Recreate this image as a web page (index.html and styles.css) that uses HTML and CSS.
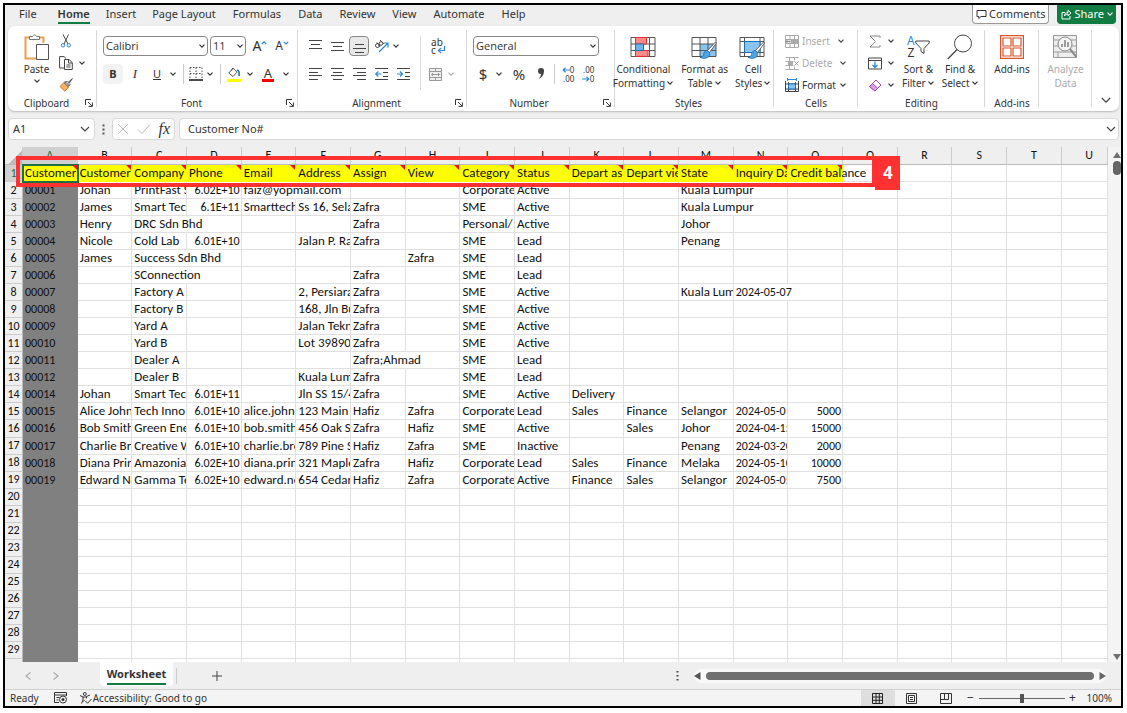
FILE: index.html
```html
<!DOCTYPE html>
<html lang="en">
<head>
<meta charset="utf-8">
<title>Worksheet</title>
<link rel="stylesheet" href="styles.css">
</head>
<body>
<svg class="defs" aria-hidden="true">
  <symbol id="chev" viewBox="0 0 8 8"><path d="M1.5 2.7 4 5.2 6.5 2.7" fill="none" stroke="currentColor" stroke-width="1.2"/></symbol>
  <symbol id="launch" viewBox="0 0 8 8"><path d="M.5 6V.5H6M3 3l4 4M7.400 3.500V7.400H3.500" fill="none" stroke="currentColor"/></symbol>
  <symbol id="brush" viewBox="0 0 18 18"><path d="M16.500 1 8.500 9.500l2 2L17.500 2Z" fill="#fff" stroke="#555" stroke-width=".9"/><path d="M8.500 9.500c-3 0-3.500 2-4 4-.4 1.500-1.500 2.500-3.500 2.700 2 1.500 6.500 1.500 8.300-.2 1.600-1.500 1.500-3 1.200-4.500Z" fill="#4ea3e0" stroke="#1a6fb5" stroke-width=".8"/></symbol>
</svg>
<div class="app">
  <header class="menu">
    <nav class="tabs">
      <button class="tab">File</button>
      <button class="tab active">Home</button>
      <button class="tab">Insert</button>
      <button class="tab">Page Layout</button>
      <button class="tab">Formulas</button>
      <button class="tab">Data</button>
      <button class="tab">Review</button>
      <button class="tab">View</button>
      <button class="tab">Automate</button>
      <button class="tab">Help</button>
    </nav>
    <button class="pill"><svg width="11" height="11" viewBox="0 0 11 11"><path d="M1 1.500h9v6H5L2.800 9.600V7.500H1Z" fill="none" stroke="#333"/></svg>Comments</button>
    <button class="pill share"><svg width="11" height="11" viewBox="0 0 11 11"><path d="M4 3.500H1v6.500h8V7M3.500 7C3.500 4.500 5 3.500 7 3.500V1.200L10 4 7 6.800V5C5.500 5 4.300 5.500 3.500 7Z" fill="none" stroke="#fff"/></svg>Share<svg class="chev"><use href="#chev"/></svg></button>
  </header>

  <main class="ribbon">
    <section class="group">
      <div class="body clip">
        <button class="big paste"><svg width="26" height="26" viewBox="0 0 26 26"><path d="M7 3.500H1.500v21H12M14 3.500h5.500V9" fill="none" stroke="#e8a04c" stroke-width="2"/><path d="M3 5h15v5h-6v13H3Z" fill="#fff"/><path d="M5.500 5.500V2.500h3C9 .5 12 .5 12.500 2.500h3v3Z" fill="#fff" stroke="#777"/><path d="M12.500 10.500h12v15h-12Z" fill="#fff" stroke="#555"/></svg>
          <span>Paste</span><svg class="chev"><use href="#chev"/></svg></button>
        <div class="stack">
          <button class="row" aria-label="Cut"><svg width="14" height="14" viewBox="0 0 14 14"><path d="M4 .5 9 10M9.500.5 5 10" fill="none" stroke="#444"/><circle cx="4" cy="11.300" r="1.700" fill="none" stroke="#2b88d8"/><circle cx="9.800" cy="11.300" r="1.700" fill="none" stroke="#2b88d8"/></svg></button>
          <button class="row" aria-label="Copy"><svg width="14" height="14" viewBox="0 0 14 14"><path d="M5 12H.6V.6H5L7 2.500M5.500 3.500H10L13.300 6.500V13.500H5.500ZM9.500 3.500V7H13M7.500 9h4M7.500 11h4" fill="none" stroke="#444"/></svg><svg class="chev"><use href="#chev"/></svg></button>
          <button class="row" aria-label="Format painter"><svg width="14" height="14" viewBox="0 0 14 14"><path d="M5 4.500 1 8.500 6 13.200 9.500 9Z" fill="#f8b26a" stroke="#d9771b"/><path d="M6 3.500 10.500 8M13.300.7 9 4.500 7.500 3 5.500 5 9 8.500 11 6.500 10 5.500Z" fill="#fff" stroke="#444"/></svg></button>
        </div>
      </div>
      <footer>Clipboard<button class="launch" aria-label="Clipboard settings"><svg width="8" height="8"><use href="#launch"/></svg></button></footer>
    </section>

    <section class="group">
      <div class="body lines">
        <div class="line">
          <label class="combo grow"><select aria-label="Font"><option>Calibri</option></select><svg class="chev"><use href="#chev"/></svg></label>
          <label class="combo size"><select aria-label="Font size"><option>11</option></select><svg class="chev"><use href="#chev"/></svg></label>
          <button class="ic w24 grower" aria-label="Grow font"><span class="bigA">A</span><svg width="6" height="12" viewBox="0 0 6 12"><path d="M.8 4 3 1.800 5.200 4" fill="none" stroke="#2b88d8" stroke-width="1.200"/></svg></button>
          <button class="ic w20" aria-label="Shrink font"><span class="smallA">A</span><svg width="6" height="12" viewBox="0 0 6 12"><path d="M.8 1.800 3 4 5.200 1.800" fill="none" stroke="#2b88d8" stroke-width="1.200"/></svg></button>
        </div>
        <div class="line">
          <button class="ic w20 soft"><b>B</b></button>
          <button class="ic w24"><i>I</i></button>
          <button class="ic w20"><u>U</u></button>
          <button class="ic w12" aria-label="Underline options"><svg class="chev"><use href="#chev"/></svg></button>
          <span class="sep"></span>
          <button class="ic w16" aria-label="Borders"><svg width="14" height="14" viewBox="0 0 14 14"><path d="M1 .5h12M1 6.500h12M1 .5V12M7 .5V12M13 .5V12" fill="none" stroke="#555" stroke-dasharray="1.500 1.500"/><path d="M0 13h14" stroke="#111" stroke-width="1.500"/></svg></button>
          <button class="ic w12" aria-label="Border options"><svg class="chev"><use href="#chev"/></svg></button>
          <span class="sep"></span>
          <button class="ic w20" aria-label="Fill colour"><svg width="14" height="15" viewBox="0 0 14 15"><path d="M6 1 1.800 6 6 9.500 10 5.200ZM6 1 4.500 3.500" fill="#fff" stroke="#555"/><path d="M10 3c2 .5 2.500 3 2 6" fill="none" stroke="#1a6fb5" stroke-width="1.600"/><path d="M0 12h14v3H0Z" fill="#ff0"/></svg></button>
          <button class="ic w12" aria-label="Fill options"><svg class="chev"><use href="#chev"/></svg></button>
          <button class="ic w24" aria-label="Font colour"><span class="colorA">A</span></button>
          <button class="ic w12" aria-label="Font colour options"><svg class="chev"><use href="#chev"/></svg></button>
        </div>
      </div>
      <footer>Font<button class="launch" aria-label="Font settings"><svg width="8" height="8"><use href="#launch"/></svg></button></footer>
    </section>

    <section class="group">
      <div class="body align">
        <div class="agrid">
          <button class="ic" aria-label="Top align"><svg width="13" height="14" viewBox="0 0 13 14"><path d="M0 1.500h13M2 5.500h9M0 9.500h13" stroke="#444"/></svg></button>
          <button class="ic" aria-label="Middle align"><svg width="13" height="14" viewBox="0 0 13 14"><path d="M0 3.500h13M2 7.500h9M0 11.500h13" stroke="#444"/></svg></button>
          <button class="ic on" aria-label="Bottom align"><svg width="13" height="14" viewBox="0 0 13 14"><path d="M2 5.500h9M0 9.500h13M2 13.500h9" stroke="#444"/></svg></button>
          <button class="ic" aria-label="Orientation"><svg width="15" height="14" viewBox="0 0 15 14"><circle cx="3.500" cy="6.500" r="2" fill="none" stroke="#444"/><path d="M3 3.500 6 8M6 1l4 4" stroke="#444" fill="none"/><circle cx="7" cy="4.500" r="1.800" fill="none" stroke="#444"/><path d="M5 13 13.500 4.500M9.500 4H14v4.500" fill="none" stroke="#2b88d8" stroke-width="1.200"/></svg></button>
          <button class="ic lefty" aria-label="Orientation options"><svg class="chev"><use href="#chev"/></svg></button>
          <button class="ic" aria-label="Align left"><svg width="13" height="14" viewBox="0 0 13 14"><path d="M0 1.500h13M0 5.500h9M0 8.500h13M0 12.500h9" stroke="#444"/></svg></button>
          <button class="ic" aria-label="Centre"><svg width="13" height="14" viewBox="0 0 13 14"><path d="M0 1.500h13M2 5.500h9M0 8.500h13M2 12.500h9" stroke="#444"/></svg></button>
          <button class="ic" aria-label="Align right"><svg width="13" height="14" viewBox="0 0 13 14"><path d="M0 1.500h13M4 5.500h9M0 8.500h13M4 12.500h9" stroke="#444"/></svg></button>
          <button class="ic" aria-label="Decrease indent"><svg width="13" height="14" viewBox="0 0 13 14"><path d="M0 1.500h13M8 5.500h5M8 9.500h5M0 12.500h13" stroke="#444"/><path d="M6.500 7H1M3.300 4.500.8 7l2.500 2.500" stroke="#2b88d8" fill="none" stroke-width="1.200"/></svg></button>
          <button class="ic" aria-label="Increase indent"><svg width="13" height="14" viewBox="0 0 13 14"><path d="M0 1.500h13M8 5.500h5M8 9.500h5M0 12.500h13" stroke="#444"/><path d="M0 7h5.500M3 4.500 5.500 7 3 9.500" stroke="#2b88d8" fill="none" stroke-width="1.200"/></svg></button>
        </div>
        <span class="vsep"></span>
        <div class="wraps">
          <button class="ic w20" aria-label="Wrap text"><span class="wraptxt"><span>ab</span><span>c</span></span><svg class="wraparrow" width="9" height="8" viewBox="0 0 9 8"><path d="M7.500 0v4.500h-6M4 2 1.500 4.500 4 7" fill="none" stroke="#2b88d8" stroke-width="1.200"/></svg></button>
          <button class="ic merge" disabled aria-label="Merge"><svg width="13" height="13" viewBox="0 0 13 13"><path d="M.5.5h12v12H.5ZM.5 3.500h12M.5 9.500h12M6.500.5v3M6.500 9.500v3" fill="#eee" stroke="#999"/><path d="M2.500 6.500h8M4 5 2.500 6.500 4 8M9 5l1.500 1.500L9 8" fill="none" stroke="#999"/></svg><svg class="chev"><use href="#chev"/></svg></button>
        </div>
      </div>
      <footer>Alignment<button class="launch" aria-label="Alignment settings"><svg width="8" height="8"><use href="#launch"/></svg></button></footer>
    </section>

    <section class="group wide">
      <div class="body lines number">
        <div class="line"><label class="combo grow"><select aria-label="Number format"><option>General</option></select><svg class="chev"><use href="#chev"/></svg></label></div>
        <div class="line">
          <button class="ic w20 sym">$</button>
          <button class="ic w12" aria-label="Currency options"><svg class="chev"><use href="#chev"/></svg></button>
          <button class="ic w24 sym">%</button>
          <button class="ic w20" aria-label="Comma style"><svg width="8" height="12" viewBox="0 0 8 12"><path d="M4 0a3 3 0 0 1 3 3.300C7 7 5 9.500 1.500 11 3.500 9 4 7.500 4 6A3 3 0 1 1 4 0Z" fill="#444"/></svg></button>
          <span class="sep"></span>
          <button class="ic w20" aria-label="Increase decimal"><span class="dec"><span><svg width="8" height="6" viewBox="0 0 8 6"><path d="M8 3H1.500M3.500.800 1.200 3l2.300 2.200" fill="none" stroke="#2b88d8" stroke-width="1.200"/></svg>0</span><span>.00</span></span></button>
          <button class="ic w20" aria-label="Decrease decimal"><span class="dec"><span>.00</span><span><svg width="8" height="6" viewBox="0 0 8 6"><path d="M0 3h6.500M4.500.800 6.800 3 4.500 5.200" fill="none" stroke="#2b88d8" stroke-width="1.200"/></svg>0</span></span></button>
        </div>
      </div>
      <footer>Number<button class="launch" aria-label="Number settings"><svg width="8" height="8"><use href="#launch"/></svg></button></footer>
    </section>

    <section class="group wide">
      <div class="body styles three">
        <button class="big"><svg width="26" height="24" viewBox="0 0 26 24"><path d="M1 2.500h24v19H1ZM1 9h24M1 15.500h24M5.500 2.500v19M19.500 2.500v19" fill="#fff" stroke="#555"/><path d="M5.500 2.500h11V9h-11ZM5.500 15.500H18v6H5.500Z" fill="#f88" stroke="#d33"/><path d="M5.500 9h8v6.500h-8Z" fill="#6cb4ea" stroke="#1a6fb5"/></svg><span>Conditional<br>Formatting<svg class="chev"><use href="#chev"/></svg></span></button>
        <button class="big"><svg width="28" height="24" viewBox="0 0 28 24"><path d="M1 2.500h24v19H1Z" fill="#fff"/><path d="M9 9h16v12.500H9Z" fill="#8ac4f0"/><path d="M1 2.500h24v19H1ZM1 9h24M1 15.500h24M9 2.500v19M17 2.500v19" fill="none" stroke="#555"/><use href="#brush" x="7" y="6" width="20" height="18"/></svg><span>Format as<br>Table<svg class="chev"><use href="#chev"/></svg></span></button>
        <button class="big"><svg width="28" height="24" viewBox="0 0 28 24"><path d="M1 2.500h24v19H1ZM1 6.500h24M1 17.500h24M5.500 2.500v19M21 2.500v19" fill="#fff" stroke="#555"/><path d="M5.500 6.500H21v11H5.500Z" fill="#8ac4f0" stroke="#1a6fb5"/><use href="#brush" x="7" y="6" width="20" height="18"/></svg><span>Cell<br>Styles<svg class="chev"><use href="#chev"/></svg></span></button>
      </div>
      <footer>Styles</footer>
    </section>

    <section class="group">
      <div class="body stack cells">
        <button class="row dim"><svg width="14" height="13" viewBox="0 0 14 13"><path d="M.5.5h13v12H.5ZM.5 4.500h13M.5 8.500h13M5 .5v12M9.500.5v12" fill="none" stroke="#aaa"/><path d="M6 4h8v5H6Z" fill="#aaa"/><path d="M5 6.500H1M3 4.500l-2 2 2 2" stroke="#888" fill="none"/></svg><span>Insert</span><svg class="chev"><use href="#chev"/></svg></button>
        <button class="row dim"><svg width="14" height="13" viewBox="0 0 14 13"><path d="M.5.5h13M.5 12.500h13M.5 4.500h8M.5 8.500h8M4.500.5v12M9.500.5v3M9.500 9.500v3" fill="none" stroke="#aaa"/><path d="M3 4h5v5H3Z" fill="#aaa"/><path d="m9.500 4.500 4 4m0-4-4 4" stroke="#999"/></svg><span>Delete</span><svg class="chev"><use href="#chev"/></svg></button>
        <button class="row"><svg width="14" height="14" viewBox="0 0 14 14"><path d="M.5 3v10.500h13V3M.5 6h13M.5 11h13M3.500 4v9.500M10.500 4v9.500" fill="none" stroke="#444"/><path d="M3.500 6h7v5h-7Z" fill="#8ac4f0" stroke="#1a6fb5"/><path d="M2.500 1.500h9M2.500 0v3M11.500 0v3" stroke="#2b88d8"/></svg><span>Format</span><svg class="chev"><use href="#chev"/></svg></button>
      </div>
      <footer>Cells</footer>
    </section>

    <section class="group">
      <div class="body edit">
        <div class="stack">
          <button class="row" aria-label="AutoSum"><svg width="14" height="13" viewBox="0 0 14 13"><path d="M12 3V1H2l5.500 5.500L2 12h10v-2" fill="none" stroke="#888"/></svg><svg class="chev"><use href="#chev"/></svg></button>
          <button class="row" aria-label="Fill"><svg width="14" height="13" viewBox="0 0 14 13"><path d="M.5 1h13v11H.5ZM.5 3.500h13" fill="none" stroke="#444"/><path d="M7 4.500v6M4.500 8 7 10.500 9.500 8" fill="none" stroke="#2b88d8" stroke-width="1.300"/></svg><svg class="chev"><use href="#chev"/></svg></button>
          <button class="row" aria-label="Clear"><svg width="14" height="13" viewBox="0 0 14 13"><path d="M8 1 13 6 7 12 1.500 7.500Z" fill="#fff" stroke="#a04db8"/><path d="m4.500 4.500 5.300 4.800L7 12 1.500 7.500Z" fill="#d9a0e6" stroke="#a04db8"/></svg><svg class="chev"><use href="#chev"/></svg></button>
        </div>
        <button class="big"><span class="sortic"><span class="az"><em>A</em><span>Z</span></span><svg width="15" height="15" viewBox="0 0 15 15"><path d="M.8 1h13.400v2L9 8.500v5L6 11.500v-3L.8 3Z" fill="none" stroke="#444"/></svg></span><span>Sort &amp;<br>Filter<svg class="chev"><use href="#chev"/></svg></span></button>
        <button class="big"><svg width="26" height="26" viewBox="0 0 26 26"><circle cx="16" cy="9.500" r="8.500" fill="none" stroke="#444"/><path d="M10 15.500.8 25" stroke="#444" stroke-width="1.300"/></svg><span>Find &amp;<br>Select<svg class="chev"><use href="#chev"/></svg></span></button>
      </div>
      <footer>Editing</footer>
    </section>

    <section class="group">
      <div class="body styles">
        <button class="big"><svg width="24" height="24" viewBox="0 0 24 24"><path d="M.6.600h22.800v22.800H.6ZM3 3h8v8H3ZM13 3h8v8h-8ZM3 13h8v8H3ZM13 13h8v8h-8Z" fill="none" stroke="#d8532b" stroke-width="1.200"/></svg><span>Add-ins</span></button>
      </div>
      <footer>Add-ins</footer>
    </section>

    <section class="group">
      <div class="body styles">
        <button class="big dim"><svg width="24" height="24" viewBox="0 0 24 24"><path d="M.5.500h23v22H.5ZM.5 5h23M.5 11h5M18 11h5.500M.5 17h23M5 17v5" fill="#eee" stroke="#999"/><circle cx="12" cy="9" r="7" fill="#f4f4f4" stroke="#888"/><path d="M9 12V9M12 12V5M15 12V7" stroke="#888" stroke-width="1.600"/><path d="m17 14 6.500 8" stroke="#888" stroke-width="2"/></svg><span>Analyze<br>Data</span></button>
      </div>
      <footer></footer>
    </section>

    <button class="collapse" aria-label="Collapse ribbon"><svg width="10" height="10" viewBox="0 0 10 10"><path d="M.8 3 5 7.200 9.200 3" fill="none" stroke="#444" stroke-width="1.200"/></svg></button>
  </main>

  <div class="formula">
    <label class="box namebox"><input value="A1" aria-label="Name box"><svg width="10" height="10" viewBox="0 0 10 10"><path d="M1 3 5 7 9 3" fill="none" stroke="#444" stroke-width="1.200"/></svg></label>
    <svg class="dots" width="3" height="11" viewBox="0 0 3 11"><path d="M.5.500h2v2h-2ZM.5 4.500h2v2h-2ZM.5 8.500h2v2h-2Z" fill="#555"/></svg>
    <div class="box fx">
      <button aria-label="Cancel"><svg width="12" height="12" viewBox="0 0 12 12"><path d="m1 1 10 10m0-10L1 11" stroke="#bbb"/></svg></button>
      <button aria-label="Enter"><svg width="14" height="12" viewBox="0 0 14 12"><path d="m1 6.500 4 4L13 1.500" stroke="#bbb" fill="none"/></svg></button>
      <button class="fn">fx</button>
    </div>
    <label class="box bar"><input value="Customer No#" aria-label="Formula bar"><svg width="10" height="10" viewBox="0 0 10 10"><path d="M1 3 5 7 9 3" fill="none" stroke="#444" stroke-width="1.200"/></svg></label>
  </div>

  <div class="sheet">
    <div class="gridwrap">
      <table id="grid"></table>
      <div class="callout"></div>
      <div class="badge">4</div>
    </div>
    <div class="vscroll">
      <svg width="8" height="8" viewBox="0 0 8 8"><path d="M4 1 8 7H0Z" fill="#707070"/></svg>
      <span class="vthumb"></span>
      <svg class="end" width="8" height="8" viewBox="0 0 8 8"><path d="M4 7 0 1h8Z" fill="#707070"/></svg>
    </div>
  </div>

  <div class="sheettabs">
    <button class="arrow" aria-label="Previous sheet"><svg width="8" height="10" viewBox="0 0 8 10"><path d="M6.500 1.500 2 5l4.500 3.500" fill="none" stroke="#aaa" stroke-width="1.200"/></svg></button>
    <button class="arrow" aria-label="Next sheet"><svg width="8" height="10" viewBox="0 0 8 10"><path d="M1.500 1.500 6 5 1.500 8.500" fill="none" stroke="#aaa" stroke-width="1.200"/></svg></button>
    <button class="wstab"><span>Worksheet</span></button>
    <span class="tabsep"></span>
    <button class="add" aria-label="New sheet"><svg width="10" height="10" viewBox="0 0 10 10"><path d="M5 0v10M0 5h10" stroke="#444"/></svg></button>
    <svg class="dots" width="3" height="10" viewBox="0 0 3 10"><path d="M.5 0h2v1.500h-2ZM.5 4h2v1.500h-2ZM.5 8h2v1.500h-2Z" fill="#444"/></svg>
    <div class="hscroll">
      <svg width="7" height="8" viewBox="0 0 7 8"><path d="M0 4 6.500 0v8Z" fill="#555"/></svg>
      <span class="hthumb"></span>
      <svg width="7" height="8" viewBox="0 0 7 8"><path d="M7 4 .5 0v8Z" fill="#666"/></svg>
    </div>
  </div>

  <footer class="status">
    <span class="ready">Ready</span>
    <svg class="macro" width="13" height="12" viewBox="0 0 13 12"><path d="M12.500 4V.5H.5v10H5M.5 3h12M2.500 5.500h3M2.500 8h2" fill="none" stroke="#333"/><circle cx="9" cy="7.500" r="3.500" fill="none" stroke="#333"/><circle cx="9" cy="7.500" r="1.500" fill="#333"/></svg>
    <button class="acc"><svg width="13" height="12" viewBox="0 0 13 12"><path d="M1 3.500 4 5v3l-1.500 3.500M11 3 7.500 4.500V6.500M4 5h3.500M5.500 8l-1 1.500" fill="none" stroke="#333"/><circle cx="5.800" cy="2" r="1.500" fill="none" stroke="#333"/><path d="m6.500 9 2 2.300 4-4.300" fill="none" stroke="#333"/></svg>Accessibility: Good to go</button>
    <div class="views">
      <button class="view on" aria-label="Normal"><svg width="11" height="11" viewBox="0 0 11 11"><path d="M.5.500h10v10H.5ZM.5 4h10M.5 7.300h10M4 .5v10M7.300.5v10" fill="none" stroke="#222"/></svg></button>
      <button class="view" aria-label="Page layout"><svg width="11" height="11" viewBox="0 0 11 11"><path d="M.5.500h10v10H.5ZM2.500 2.500h6v6h-6ZM4 4.500h3M4 6.500h3" fill="none" stroke="#333"/></svg></button>
      <button class="view" aria-label="Page break"><svg width="12" height="11" viewBox="0 0 12 11"><path d="M.5.500h11v10H.5ZM4.500.5v6h4V.5M.5 6.500h4" fill="none" stroke="#333"/></svg></button>
    </div>
    <button class="zoombtn">−</button>
    <input class="zoom" type="range" min="0" max="100" value="50" aria-label="Zoom">
    <button class="zoombtn">+</button>
    <span class="pct">100%</span>
  </footer>
</div>
<script src="sheet.js"></script>
</body>
</html>
```
FILE: styles.css
```css
* { box-sizing: border-box; }
body {
  margin: 0; height: 100vh; padding: 3px 4px 5px 3px; background: #fff;
  font: 11px/14px "Noto Sans", "Open Sans", sans-serif; color: #333;
}
button, select, input { font: inherit; color: inherit; margin: 0; padding: 0; border: 0; background: none; }
svg { display: block; flex: none; }
em { font-style: normal; color: #2b88d8; }
.defs { position: absolute; width: 0; height: 0; }
.chev { width: 8px; height: 8px; }
.app {
  height: 100%; border: 2px solid #000; background: #efefef;
  display: flex; flex-direction: column; overflow: hidden;
}

.menu { display: flex; height: 21px; flex: none; padding-right: 5px; gap: 8px; }
.tabs { display: flex; flex: 1; padding-left: 6px; }
.tab { padding: 2px 8px 0; height: 19px; line-height: 14px; display: flex; flex-direction: column; }
.tab:nth-child(n+5) { padding-left: 9px; }
.tab.active { font-weight: 600; margin-left: 5px; }
.tab.active::after { content: ""; height: 2px; margin-top: 1px; align-self: stretch; background: #107c41; }
.pill {
  display: flex; align-items: center; gap: 2px; height: 19px; padding: 0 3px;
  background: #fff; border: 1px solid #999; border-top: 0; border-radius: 0 0 4px 4px;
}
.share { background: #107c41; border-color: #107c41; color: #fff; padding: 0 1px 0 3px; }

.ribbon {
  flex: none; height: 85px; margin: 0 2px 0 3px; background: #fff; border-radius: 7px;
  box-shadow: 0 1px 2px #bbb; display: grid;
  grid-template-columns: 89fr 201fr 169fr 148fr 159fr 84fr 127fr 54fr 53fr 27fr;
}
.group { position: relative; display: flex; flex-direction: column; padding: 8px 0 1px; min-width: 0; }
.group::after { content: ""; position: absolute; right: 0; top: 4px; bottom: 4px; width: 1px; background: #d8d8d8; }
.group footer { position: relative; height: 14px; text-align: center; font-size: 10px; line-height: 14px; padding-right: 12px; }
.group:nth-child(n+5) footer { padding: 0; }
.group.wide footer { padding-right: 24px; }
.group.wide:nth-child(5) footer { padding-right: 12px; }
.launch { position: absolute; right: 4px; top: 3px; }
.body { flex: 1; display: flex; min-height: 0; }
.big { display: flex; flex-direction: column; align-items: center; text-align: center; font-size: 10px; line-height: 14px; gap: 2px; white-space: nowrap; }
.big > svg:first-child { height: 26px; }
.big span .chev { display: inline-block; margin-left: 1px; }
.big > .chev { margin-top: -1px; }
.dim { color: #aaa; }
.dim .chev { color: #444; }
.clip { padding-left: 14px; gap: 7px; }
.clip .paste { width: 29px; }
.stack { display: flex; flex-direction: column; gap: 8px; }
.row { display: flex; align-items: center; height: 14px; gap: 5px; font-size: 10px; }
.clip .stack .row { padding-left: 1px; }

.lines { flex-direction: column; gap: 8px; padding: 2px 6px 0; }
.line { display: flex; align-items: center; height: 20px; }
.combo { display: flex; align-items: center; height: 20px; border: 1px solid #888; border-radius: 4px; padding: 0 1px 0 2px; background: #fff; }
.combo select { appearance: none; flex: 1; min-width: 0; font: 11px/16px "Open Sans", sans-serif; outline: 0; }
.combo.grow { flex: 1; }
.combo.size { width: 36px; margin-left: 2px; }
.number { padding-right: 16px; }
.ic { display: flex; align-items: center; justify-content: center; height: 20px; flex: none; position: relative; }
.w12 { width: 12px; }
.w16 { width: 16px; }
.w20 { width: 20px; }
.w24 { width: 24px; }
.grower { margin-left: 2px; }
.soft { background: #f2f2f2; border-radius: 4px; }
.ic i { font-family: "Liberation Serif", serif; font-size: 13px; }
.bigA { font-size: 14px; }
.smallA { font-size: 12px; }
.colorA { font-size: 13px; line-height: 12px; border-bottom: 3px solid #f00; padding: 0 2px; }
.sep { width: 1px; height: 20px; background: #ccc; margin: 0 4px; }
.align { padding: 2px 0 0 6px; gap: 6px; }
.agrid { display: grid; grid-template-columns: repeat(5, 22px); grid-auto-rows: 20px; row-gap: 8px; }
.agrid .on { background: #e8e8e8; border: 1px solid #888; border-radius: 4px; width: 20px; justify-self: center; }
.lefty { justify-content: flex-start; }
.vsep { width: 1px; height: 54px; background: #d8d8d8; }
.wraps { display: flex; flex-direction: column; gap: 8px; }
.merge { gap: 5px; color: #aaa; padding-left: 2px; }
.wraptxt { display: flex; flex-direction: column; font-size: 10px; line-height: 8px; text-align: left; }
.wraparrow { position: absolute; left: 10px; top: 10px; }
.sym { font-size: 15px; }
.number .w24 { margin-left: 2px; }
.number .sep { margin: 0 3px; }
.dec { display: flex; flex-direction: column; align-items: flex-end; font-size: 8px; line-height: 9px; }
.dec span { display: flex; align-items: center; }
.styles { justify-content: center; gap: 7px; }
.three { padding-right: 5px; }
.cells { padding-left: 11px; padding-top: 0; }
.cells .row { gap: 3px; }
.cells .dim .chev { margin-left: 4px; }
.edit { padding-left: 10px; gap: 7px; }
.sortic { display: flex; height: 26px; align-items: center; }
.az { display: flex; flex-direction: column; font-size: 12px; line-height: 12px; }
.collapse { display: flex; align-items: flex-end; justify-content: center; padding-bottom: 6px; }

.formula { display: flex; flex: none; height: 36px; padding: 7px 2px 7px 3px; align-items: center; }
.box { display: flex; align-items: center; height: 22px; background: #fff; border: 1px solid #d8d8d8; border-radius: 4px; }
.box input { flex: 1; min-width: 0; outline: 0; }
.namebox { width: 87px; padding: 0 4px; }
.formula .dots { margin: 0 7px; }
.fx { width: 63px; justify-content: space-around; }
.fn { font: italic 16px/16px "Liberation Serif", serif; }
.bar { flex: 1; margin-left: 4px; padding: 0 2px 0 8px; }

.sheet { flex: 1; min-height: 0; display: flex; }
.gridwrap { flex: 1; min-width: 0; position: relative; background: #fff; overflow: hidden; }
#grid {
  width: 100%; height: 100%; table-layout: fixed; border-collapse: separate; border-spacing: 0;
  font: 13px/15px Carlito, Lato, sans-serif; color: #111;
}
#grid .rowhead { width: 18px; }
#grid .part { width: 46px; padding-left: 9px; }
#grid th { font-weight: normal; font-size: 12px; padding: 0; background: #efefef; border-right: 1px solid #bbb; border-bottom: 1px solid #bbb; overflow: hidden; white-space: nowrap; vertical-align: middle; }
#grid thead th { height: 18px; border-right-color: #ccc; }
#grid tbody th { height: 17px; text-align: center; border-bottom-color: #ccc; }
#grid th.sel { background: #d0d0d0; color: #1d7044; }
#grid thead th.corner { background: linear-gradient(135deg, #efefef 60%, #bbb 60%); }
#grid td { height: 17px; padding: 0 1px 0 2px; border-right: 1px solid #e0e0e0; border-bottom: 1px solid #e0e0e0; overflow: hidden; white-space: nowrap; position: relative; vertical-align: middle; line-height: 14px; }
#grid td.digits { font-size: 12px; }
#grid td.num { text-align: right; }
#grid td.spill { overflow: visible; border-right-color: transparent; z-index: 1; }
#grid td.key { background: #808080; border-color: #808080; }
#grid td.head { background: #ff0; border-color: #ff0; }
#grid td.head::after { content: ""; position: absolute; right: 0; top: 0; border-top: 5px solid #e11; border-left: 5px solid transparent; }
#grid td.head.key { outline: 2px solid #1d7044; outline-offset: -1px; z-index: 2; }
#grid tr.sliver th, #grid tr.sliver td { height: 3px; border-bottom: 0; line-height: 0; }
.callout { position: absolute; left: 11px; top: 9px; width: 78%; height: 31px; border: 4px solid #ff3131; z-index: 3; }
.badge { position: absolute; left: calc(78% + 10px); top: 9px; width: 25px; height: 34px; background: #ff3131; color: #fff; z-index: 3; font: bold 17px/34px "Open Sans", sans-serif; text-align: center; }
.vscroll { width: 13px; padding: 4px 0 1px 5px; background: #f4f4f4; display: flex; flex-direction: column; }
.vthumb { width: 8px; height: 14px; margin-top: 2px; border-radius: 4px; background: #666; }
.vscroll .end { margin-top: auto; }

.sheettabs { flex: none; height: 28px; display: flex; align-items: center; padding: 0 15px 0 9px; border-bottom: 1px solid #d0d0d0; }
.arrow { width: 28px; display: flex; justify-content: center; }
.wstab { width: 73px; height: 24px; margin-left: 30px; align-self: flex-start; background: #fff; border-radius: 0 0 4px 4px; font-weight: bold; color: #333; padding-top: 4px; }
.wstab span { display: inline-block; border-bottom: 2px solid #107c41; height: 18px; }
.tabsep { width: 1px; height: 16px; background: #ccc; margin-left: 3px; }
.add { margin: 0 auto 0 35px; }
.hscroll { width: 412px; height: 14px; margin-left: 15px; display: flex; align-items: center; gap: 5px; background: #f8f8f8; border-radius: 7px; }
.hthumb { flex: 1; height: 8px; border-radius: 4px; background: #707070; }

.status { flex: none; height: 16px; background: #f4f4f4; display: flex; align-items: center; font-size: 10px; line-height: 14px; padding: 0 9px 0 5px; }
.macro { margin: 0 12px 0 15px; }
.acc { display: flex; align-items: center; gap: 1px; }
.views { display: flex; margin-left: auto; }
.view { width: 34px; height: 16px; display: flex; align-items: center; justify-content: center; }
.view.on { background: #dedede; }
.zoombtn { width: 16px; font-size: 12px; }
.zoom { appearance: none; width: 86px; height: 10px; background: linear-gradient(#666, #666) center / 100% 1px no-repeat; }
.zoom::-webkit-slider-thumb { appearance: none; width: 4px; height: 9px; background: #555; }
.pct { margin-left: 6px; }
```
FILE: sheet.js
```js
// Column letters; P is hidden, so O is followed by Q.
const columns = "ABCDEFGHIJKLMNOQRSTU".split("");
const visibleRows = 29;

// One object per row: column letter -> text.
const rows = [
  { A: "Customer", B: "Customer", C: "Company", D: "Phone", E: "Email", F: "Address", G: "Assign", H: "View", I: "Category", J: "Status", K: "Depart ass", L: "Depart vie", M: "State", N: "Inquiry Da", O: "Credit balance" },
  { A: "00001", B: "Johan", C: "PrintFast S", D: "6.02E+10", E: "faiz@yopmail.com", I: "Corporate", J: "Active", M: "Kuala Lumpur" },
  { A: "00002", B: "James", C: "Smart Tec", D: "6.1E+11", E: "Smarttech", F: "Ss 16, Sela", G: "Zafra", I: "SME", J: "Active", M: "Kuala Lumpur" },
  { A: "00003", B: "Henry", C: "DRC Sdn Bhd", G: "Zafra", I: "Personal/", J: "Active", M: "Johor" },
  { A: "00004", B: "Nicole", C: "Cold Lab", D: "6.01E+10", F: "Jalan P. Ra", G: "Zafra", I: "SME", J: "Lead", M: "Penang" },
  { A: "00005", B: "James", C: "Success Sdn Bhd", H: "Zafra", I: "SME", J: "Lead" },
  { A: "00006", C: "SConnection", G: "Zafra", I: "SME", J: "Lead" },
  { A: "00007", C: "Factory A", F: "2, Persiara", G: "Zafra", I: "SME", J: "Active", M: "Kuala Lum", N: "2024-05-07" },
  { A: "00008", C: "Factory B", F: "168, Jln Bu", G: "Zafra", I: "SME", J: "Active" },
  { A: "00009", C: "Yard A", F: "Jalan Tekn", G: "Zafra", I: "SME", J: "Active" },
  { A: "00010", C: "Yard B", F: "Lot 39890,", G: "Zafra", I: "SME", J: "Active" },
  { A: "00011", C: "Dealer A", G: "Zafra;Ahmad", I: "SME", J: "Lead" },
  { A: "00012", C: "Dealer B", F: "Kuala Lum", G: "Zafra", I: "SME", J: "Lead" },
  { A: "00014", B: "Johan", C: "Smart Tec", D: "6.01E+11", F: "Jln SS 15/4", G: "Zafra", I: "SME", J: "Active", K: "Delivery" },
  { A: "00015", B: "Alice John", C: "Tech Inno", D: "6.01E+10", E: "alice.john", F: "123 Main S", G: "Hafiz", H: "Zafra", I: "Corporate", J: "Lead", K: "Sales", L: "Finance", M: "Selangor", N: "2024-05-01", O: "5000" },
  { A: "00016", B: "Bob Smith", C: "Green Ene", D: "6.01E+10", E: "bob.smith", F: "456 Oak St", G: "Zafra", H: "Hafiz", I: "SME", J: "Active", L: "Sales", M: "Johor", N: "2024-04-15", O: "15000" },
  { A: "00017", B: "Charlie Br", C: "Creative W", D: "6.01E+10", E: "charlie.bro", F: "789 Pine S", G: "Hafiz", H: "Zafra", I: "SME", J: "Inactive", M: "Penang", N: "2024-03-20", O: "2000" },
  { A: "00018", B: "Diana Prin", C: "Amazonia", D: "6.02E+10", E: "diana.prin", F: "321 Maple", G: "Zafra", H: "Hafiz", I: "Corporate", J: "Lead", K: "Sales", L: "Finance", M: "Melaka", N: "2024-05-10", O: "10000" },
  { A: "00019", B: "Edward Ne", C: "Gamma Te", D: "6.02E+10", E: "edward.ne", F: "654 Cedar", G: "Hafiz", H: "Zafra", I: "Corporate", J: "Active", K: "Finance", L: "Sales", M: "Selangor", N: "2024-05-05", O: "7500" }
];

function cell(tag, text, ...classes) {
  const el = document.createElement(tag);
  if (text) el.textContent = text;
  classes.filter(Boolean).forEach(name => el.classList.add(name));
  return el;
}

const table = document.getElementById("grid");
const head = table.createTHead().insertRow();
head.append(cell("th", "", "rowhead", "corner"));
columns.forEach(letter =>
  head.append(cell("th", letter, letter === "A" && "sel", letter === "U" && "part")));

const body = table.createTBody();
for (let r = 0; r <= visibleRows; r++) {
  const tr = body.insertRow();
  const last = r === visibleRows;
  if (last) tr.className = "sliver";
  tr.append(cell("th", last ? "" : String(r + 1), r === 0 && "sel"));
  const data = rows[r] || {};
  columns.forEach((letter, i) => {
    const text = data[letter];
    const spills = text && text.length > 9 && !data[columns[i + 1]];
    tr.append(cell("td", text,
      letter === "A" && "key",
      r === 0 && text && "head",
      /^\d[\dE.+-]*$/.test(text) && "digits",
      r > 0 && text && (letter === "D" || letter === "O") && "num",
      spills && "spill"));
  });
}
```
